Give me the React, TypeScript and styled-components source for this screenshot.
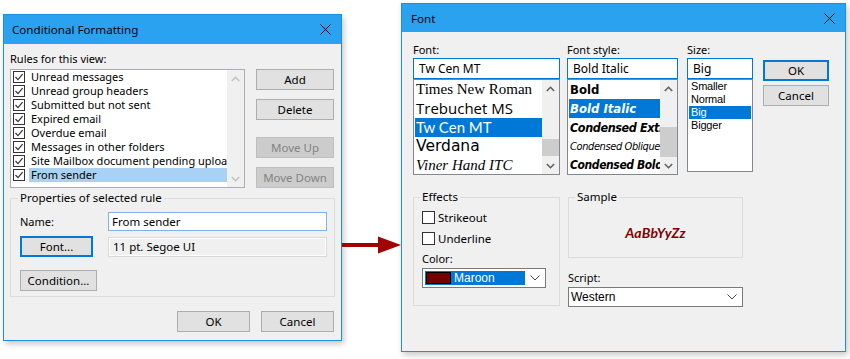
import React from "react";
import styled, { createGlobalStyle, css } from "styled-components";

const GlobalStyle = createGlobalStyle`
  html, body {
    margin: 0;
    padding: 0;
    background: #ffffff;
  }
  body {
    font-family: "Noto Sans", "Open Sans", sans-serif;
    font-size: 11px;
    color: #000;
  }
`;

const Stage = styled.div`
  display: flex;
  align-items: flex-start;
  width: 850px;
  height: 359px;
  padding-left: 3px;
  box-sizing: border-box;
  overflow: hidden;
`;

const Dialog = styled.div<{ $w: number; $h: number; $top: number }>`
  box-sizing: border-box;
  flex-shrink: 0;
  width: ${(p) => p.$w}px;
  height: ${(p) => p.$h}px;
  margin-top: ${(p) => p.$top}px;
  border: 1px solid #1c8fe2;
  background: #f0f0f0;
  box-shadow: 2px 3px 6px rgba(0, 0, 0, 0.22);
  display: flex;
  flex-direction: column;
`;

const TitleBar = styled.div<{ $h: number; $pl: number }>`
  flex-shrink: 0;
  height: ${(p) => p.$h}px;
  background: #2aa2f0;
  display: flex;
  align-items: center;
  justify-content: space-between;
  padding: 0 10px 0 ${(p) => p.$pl}px;
  font-size: 11.6px;
  color: #000;
`;

const ArrowWrap = styled.div`
  flex-shrink: 0;
  width: 59px;
  height: 18px;
  margin-top: 236px;
  display: flex;
`;

/* ---------- left dialog ---------- */

const LeftBody = styled.div`
  padding: 8px 6px 0 6px;
  display: flex;
  flex-direction: column;
`;

const TopRow = styled.div`
  display: flex;
  gap: 11px;
  align-items: flex-start;
`;

const RulesColumn = styled.div`
  display: flex;
  flex-direction: column;
`;

const Label = styled.div<{ $mb?: number; $mt?: number }>`
  line-height: 14px;
  white-space: nowrap;
  margin-bottom: ${(p) => p.$mb ?? 0}px;
  margin-top: ${(p) => p.$mt ?? 0}px;
`;

const RuleList = styled.div`
  box-sizing: border-box;
  width: 235px;
  height: 119px;
  border: 1px solid #abadb3;
  background: #fff;
  display: flex;
  overflow: hidden;
`;

const RuleItems = styled.div`
  flex: 1;
  min-width: 0;
  padding-left: 2px;
  display: flex;
  flex-direction: column;
`;

const RuleRow = styled.div`
  height: 14px;
  display: flex;
  align-items: center;
  flex-shrink: 0;
`;

const RuleText = styled.div<{ $selected?: boolean }>`
  flex: 1;
  min-width: 0;
  height: 14px;
  line-height: 14px;
  margin-left: 4px;
  padding-left: 2px;
  white-space: nowrap;
  overflow: hidden;
  ${(p) =>
    p.$selected &&
    css`
      background: #a9d1f3;
    `}
`;

const Scrollbar = styled.div`
  width: 17px;
  flex-shrink: 0;
  background: #f0f0f0;
  display: flex;
  flex-direction: column;
`;

const ScrollArrow = styled.div`
  height: 17px;
  flex-shrink: 0;
  display: flex;
  align-items: center;
  justify-content: center;
`;

const ScrollTrack = styled.div`
  flex: 1;
  display: flex;
  flex-direction: column;
`;

const ScrollThumb = styled.div<{ $top: number; $h: number }>`
  margin-top: ${(p) => p.$top}px;
  height: ${(p) => p.$h}px;
  background: #cdcdcd;
`;

const ButtonColumn = styled.div<{ $pt: number }>`
  display: flex;
  flex-direction: column;
  padding-top: ${(p) => p.$pt}px;
`;

const Button = styled.button<{ $w: number; $h?: number; $mt?: number; $focus?: boolean }>`
  box-sizing: border-box;
  width: ${(p) => p.$w}px;
  height: ${(p) => p.$h ?? 21}px;
  margin: ${(p) => p.$mt ?? 0}px 0 0 0;
  padding: 0;
  border: 1px solid #adadad;
  background: #e1e1e1;
  font-family: inherit;
  font-size: 11.5px;
  color: #000;
  ${(p) =>
    p.$focus &&
    css`
      border: 2px solid #0078d7;
    `}
  &:disabled {
    background: #cccccc;
    border-color: #bfbfbf;
    color: #838383;
  }
`;

const Group = styled.fieldset<{ $w: number; $mt?: number; $pad: string }>`
  box-sizing: border-box;
  width: ${(p) => p.$w}px;
  margin: ${(p) => p.$mt ?? 0}px 0 0 0;
  padding: ${(p) => p.$pad};
  border: 1px solid #dcdcdc;
  min-width: 0;
`;

const Legend = styled.legend`
  padding: 0 2px;
  margin-left: -2px;
  line-height: 14px;
  font-size: 11.5px;
`;

const PropsGrid = styled.div`
  display: grid;
  grid-template-columns: 88px 219px;
  align-items: center;
  row-gap: 5px;
`;

const NameInput = styled.div`
  box-sizing: border-box;
  height: 19px;
  border: 1px solid #7eb4ea;
  background: #fff;
  padding-left: 3px;
  line-height: 17px;
  font-size: 11.5px;
`;

const InfoField = styled.div`
  box-sizing: border-box;
  height: 20px;
  border: 1px solid #d9d9d9;
  box-shadow: inset 0 0 0 1px #ffffff;
  background: #f0f0f0;
  padding-left: 4px;
  line-height: 18px;
  font-size: 11.5px;
`;

const Footer = styled.div`
  display: flex;
  justify-content: flex-end;
  gap: 11px;
  margin-top: 14px;
  padding-right: 1px;
`;

/* ---------- right dialog ---------- */

const RightBody = styled.div`
  padding: 11px 0 0 11px;
  display: flex;
  flex-direction: column;
`;

const PickerRow = styled.div`
  display: flex;
  align-items: flex-start;
`;

const PickerColumn = styled.div<{ $w: number; $mr: number }>`
  width: ${(p) => p.$w}px;
  margin-right: ${(p) => p.$mr}px;
  display: flex;
  flex-direction: column;
  flex-shrink: 0;
`;

const TextBox = styled.div`
  box-sizing: border-box;
  height: 21px;
  border: 1px solid #0078d7;
  background: #fff;
  padding-left: 5px;
  line-height: 19px;
  font-size: 12px;
  white-space: nowrap;
  overflow: hidden;
`;

const ListBox = styled.div<{ $h: number }>`
  box-sizing: border-box;
  height: ${(p) => p.$h}px;
  border: 1px solid #828790;
  background: #fff;
  display: flex;
  overflow: hidden;
`;

const Options = styled.div`
  flex: 1;
  min-width: 0;
  padding-left: 1px;
  display: flex;
  flex-direction: column;
`;

const FontOption = styled.div<{
  $family: string;
  $size: number;
  $weight?: number;
  $italic?: boolean;
  $selected?: boolean;
  $condensed?: boolean;
}>`
  flex-shrink: 0;
  height: 19px;
  line-height: 19px;
  padding-left: 1px;
  white-space: nowrap;
  overflow: hidden;
  font-family: ${(p) => p.$family};
  font-size: ${(p) => p.$size}px;
  font-weight: ${(p) => p.$weight ?? 400};
  font-style: ${(p) => (p.$italic ? "italic" : "normal")};
  font-stretch: ${(p) => (p.$condensed ? "condensed" : "normal")};
  letter-spacing: ${(p) => (p.$condensed ? "-0.4px" : "0")};
  ${(p) =>
    p.$selected &&
    css`
      background: #0078d7;
      color: #fff;
    `}
`;

const SizeOption = styled.div<{ $selected?: boolean }>`
  height: 13px;
  line-height: 13px;
  padding-left: 2px;
  margin-right: 1px;
  font-family: "Liberation Sans", Arial, sans-serif;
  font-size: 11px;
  letter-spacing: -0.2px;
  ${(p) =>
    p.$selected &&
    css`
      background: #0078d7;
      color: #fff;
    `}
`;

const LowerRow = styled.div`
  display: flex;
  align-items: flex-start;
  gap: 8px;
  margin-top: 15px;
`;

const EffectsColumn = styled.div`
  display: flex;
  flex-direction: column;
`;

const CheckRow = styled.label<{ $mt?: number }>`
  display: flex;
  align-items: center;
  gap: 3px;
  height: 16px;
  margin-top: ${(p) => p.$mt ?? 0}px;
  font-size: 11.5px;
`;

const CheckBox = styled.span`
  box-sizing: border-box;
  width: 13px;
  height: 13px;
  border: 1px solid #333;
  background: #fff;
`;

const ComboBox = styled.div<{ $w: number; $mt?: number }>`
  box-sizing: border-box;
  width: ${(p) => p.$w}px;
  height: 20px;
  margin-top: ${(p) => p.$mt ?? 0}px;
  border: 1px solid #7a7a7a;
  background: #fff;
  display: flex;
  align-items: center;
  justify-content: space-between;
  padding: 0 5px 0 2px;
  font-family: "Liberation Sans", Arial, sans-serif;
  font-size: 12px;
`;

const ColorChoice = styled.div`
  width: 100px;
  height: 14px;
  background: #0078d7;
  color: #fff;
  display: flex;
  align-items: center;
  gap: 3px;
`;

const Swatch = styled.span<{ $color: string }>`
  box-sizing: border-box;
  width: 25px;
  height: 12px;
  margin-left: 1px;
  border: 1px solid #000;
  background: ${(p) => p.$color};
`;

const SampleArea = styled.div`
  height: 53px;
  padding-top: 4px;
  box-sizing: border-box;
  display: flex;
  align-items: center;
  justify-content: center;
`;

const SampleText = styled.span`
  font-family: Lato, "Noto Sans", sans-serif;
  font-weight: 700;
  font-style: italic;
  font-size: 14px;
  color: #800000;
  letter-spacing: 0.2px;
`;

/* ---------- drawings ---------- */

const CloseIcon = () => (
  <svg width="11" height="11" viewBox="0 0 11 11">
    <path d="M0.5 0.5 L10.5 10.5 M10.5 0.5 L0.5 10.5" stroke="#000" strokeWidth="1" fill="none" />
  </svg>
);

const Chevron = ({ up, color }: { up?: boolean; color: string }) => (
  <svg width="9" height="6" viewBox="0 0 9 6">
    <path
      d={up ? "M0.8 5 L4.5 1.3 L8.2 5" : "M0.8 1 L4.5 4.7 L8.2 1"}
      stroke={color}
      strokeWidth="1.6"
      fill="none"
    />
  </svg>
);

const ComboChevron = () => (
  <svg width="10" height="6" viewBox="0 0 10 6">
    <path d="M0.5 0.5 L5 5 L9.5 0.5" stroke="#444" strokeWidth="1" fill="none" />
  </svg>
);

const CheckedBox = () => (
  <svg width="12" height="12" viewBox="0 0 12 12">
    <rect x="0.5" y="0.5" width="11" height="11" fill="#fff" stroke="#333" />
    <path d="M2.5 6 L5 8.6 L9.6 3.2" stroke="#333" strokeWidth="1.2" fill="none" />
  </svg>
);

const Arrow = () => (
  <svg width="59" height="18" viewBox="0 0 59 18">
    <rect x="0" y="7" width="38" height="4" fill="#a30000" />
    <polygon points="36,0.5 59,9 36,17.5" fill="#a30000" />
  </svg>
);

const ScrollBar = ({ thumb, color }: { thumb?: { top: number; h: number }; color: string }) => (
  <Scrollbar>
    <ScrollArrow>
      <Chevron up color={color} />
    </ScrollArrow>
    <ScrollTrack>{thumb && <ScrollThumb $top={thumb.top} $h={thumb.h} />}</ScrollTrack>
    <ScrollArrow>
      <Chevron color={color} />
    </ScrollArrow>
  </Scrollbar>
);

/* ---------- data ---------- */

const rules = [
  "Unread messages",
  "Unread group headers",
  "Submitted but not sent",
  "Expired email",
  "Overdue email",
  "Messages in other folders",
  "Site Mailbox document pending upload",
  "From sender",
];

const fonts = [
  { name: "Times New Roman", family: '"Liberation Serif", serif', size: 15 },
  { name: "Trebuchet MS", family: '"Open Sans", sans-serif', size: 15 },
  { name: "Tw Cen MT", family: 'Lato, sans-serif', size: 15, selected: true },
  { name: "Verdana", family: '"DejaVu Sans", sans-serif', size: 15.5 },
  { name: "Viner Hand ITC", family: '"Liberation Serif", serif', size: 15, italic: true },
];

const styles = [
  { name: "Bold", weight: 700, size: 13 },
  { name: "Bold Italic", weight: 700, italic: true, size: 13, selected: true },
  { name: "Condensed Extra Bold", weight: 800, italic: true, size: 12.5, condensed: true },
  { name: "Condensed Oblique", weight: 400, italic: true, size: 11, condensed: true },
  { name: "Condensed Bold Oblique", weight: 700, italic: true, size: 12, condensed: true },
];

const sizes = ["Smaller", "Normal", "Big", "Bigger"];

export default function App() {
  return (
    <>
      <GlobalStyle />
      <Stage>
        <Dialog $w={339} $h={327} $top={14}>
          <TitleBar $h={29} $pl={8}>
            <span>Conditional Formatting</span>
            <CloseIcon />
          </TitleBar>
          <LeftBody>
            <TopRow>
              <RulesColumn>
                <Label $mb={3}>Rules for this view:</Label>
                <RuleList>
                  <RuleItems>
                    {rules.map((r, i) => (
                      <RuleRow key={r}>
                        <CheckedBox />
                        <RuleText $selected={i === rules.length - 1}>{r}</RuleText>
                      </RuleRow>
                    ))}
                  </RuleItems>
                  <ScrollBar color="#c2c2c2" />
                </RuleList>
              </RulesColumn>
              <ButtonColumn $pt={17}>
                <Button $w={78}>Add</Button>
                <Button $w={78} $mt={9}>
                  Delete
                </Button>
                <Button $w={78} $mt={17} disabled>
                  Move Up
                </Button>
                <Button $w={78} $mt={9} disabled>
                  Move Down
                </Button>
              </ButtonColumn>
            </TopRow>

            <Group $w={325} $mt={3} $pad="7px 8px 5px 9px">
              <Legend>Properties of selected rule</Legend>
              <PropsGrid>
                <Label>Name:</Label>
                <NameInput>From sender</NameInput>
                <Button $w={73} $focus>
                  Font...
                </Button>
                <InfoField>11 pt. Segoe UI</InfoField>
                <Button $w={77} $mt={8}>
                  Condition...
                </Button>
              </PropsGrid>
            </Group>

            <Footer>
              <Button $w={73}>OK</Button>
              <Button $w={73}>Cancel</Button>
            </Footer>
          </LeftBody>
        </Dialog>

        <ArrowWrap>
          <Arrow />
        </ArrowWrap>

        <Dialog $w={445} $h={349} $top={3}>
          <TitleBar $h={28} $pl={9}>
            <span>Font</span>
            <CloseIcon />
          </TitleBar>
          <RightBody>
            <PickerRow>
              <PickerColumn $w={147} $mr={7}>
                <Label $mb={1}>Font:</Label>
                <TextBox>Tw Cen MT</TextBox>
                <ListBox $h={96}>
                  <Options>
                    {fonts.map((f) => (
                      <FontOption
                        key={f.name}
                        $family={f.family}
                        $size={f.size}
                        $italic={f.italic}
                        $selected={f.selected}
                      >
                        {f.name}
                      </FontOption>
                    ))}
                  </Options>
                  <ScrollBar color="#606060" thumb={{ top: 42, h: 17 }} />
                </ListBox>
              </PickerColumn>

              <PickerColumn $w={111} $mr={9}>
                <Label $mb={1}>Font style:</Label>
                <TextBox>Bold Italic</TextBox>
                <ListBox $h={96}>
                  <Options>
                    {styles.map((s) => (
                      <FontOption
                        key={s.name}
                        $family='"DejaVu Sans Condensed", "DejaVu Sans", sans-serif'
                        $size={s.size}
                        $weight={s.weight}
                        $italic={s.italic}
                        $selected={s.selected}
                        $condensed={s.condensed}
                      >
                        {s.name}
                      </FontOption>
                    ))}
                  </Options>
                  <ScrollBar color="#606060" thumb={{ top: 30, h: 30 }} />
                </ListBox>
              </PickerColumn>

              <PickerColumn $w={66} $mr={10}>
                <Label $mb={1}>Size:</Label>
                <TextBox>Big</TextBox>
                <ListBox $h={93}>
                  <Options>
                    {sizes.map((s) => (
                      <SizeOption key={s} $selected={s === "Big"}>
                        {s}
                      </SizeOption>
                    ))}
                  </Options>
                </ListBox>
              </PickerColumn>

              <ButtonColumn $pt={17}>
                <Button $w={66} $h={21} $focus>
                  OK
                </Button>
                <Button $w={66} $h={21} $mt={4}>
                  Cancel
                </Button>
              </ButtonColumn>
            </PickerRow>

            <LowerRow>
              <Group $w={147} $pad="5px 8px 17px 8px">
                <Legend>Effects</Legend>
                <EffectsColumn>
                  <CheckRow>
                    <CheckBox />
                    Strikeout
                  </CheckRow>
                  <CheckRow $mt={5}>
                    <CheckBox />
                    Underline
                  </CheckRow>
                  <Label $mt={6}>Color:</Label>
                  <ComboBox $w={124} $mt={2}>
                    <ColorChoice>
                      <Swatch $color="#760000" />
                      Maroon
                    </ColorChoice>
                    <ComboChevron />
                  </ComboBox>
                </EffectsColumn>
              </Group>

              <EffectsColumn>
                <Group $w={175} $pad="0 8px 0 8px">
                  <Legend>Sample</Legend>
                  <SampleArea>
                    <SampleText>AaBbYyZz</SampleText>
                  </SampleArea>
                </Group>
                <Label $mt={13}>Script:</Label>
                <ComboBox $w={175} $mt={2}>
                  <span>Western</span>
                  <ComboChevron />
                </ComboBox>
              </EffectsColumn>
            </LowerRow>
          </RightBody>
        </Dialog>
      </Stage>
    </>
  );
}
